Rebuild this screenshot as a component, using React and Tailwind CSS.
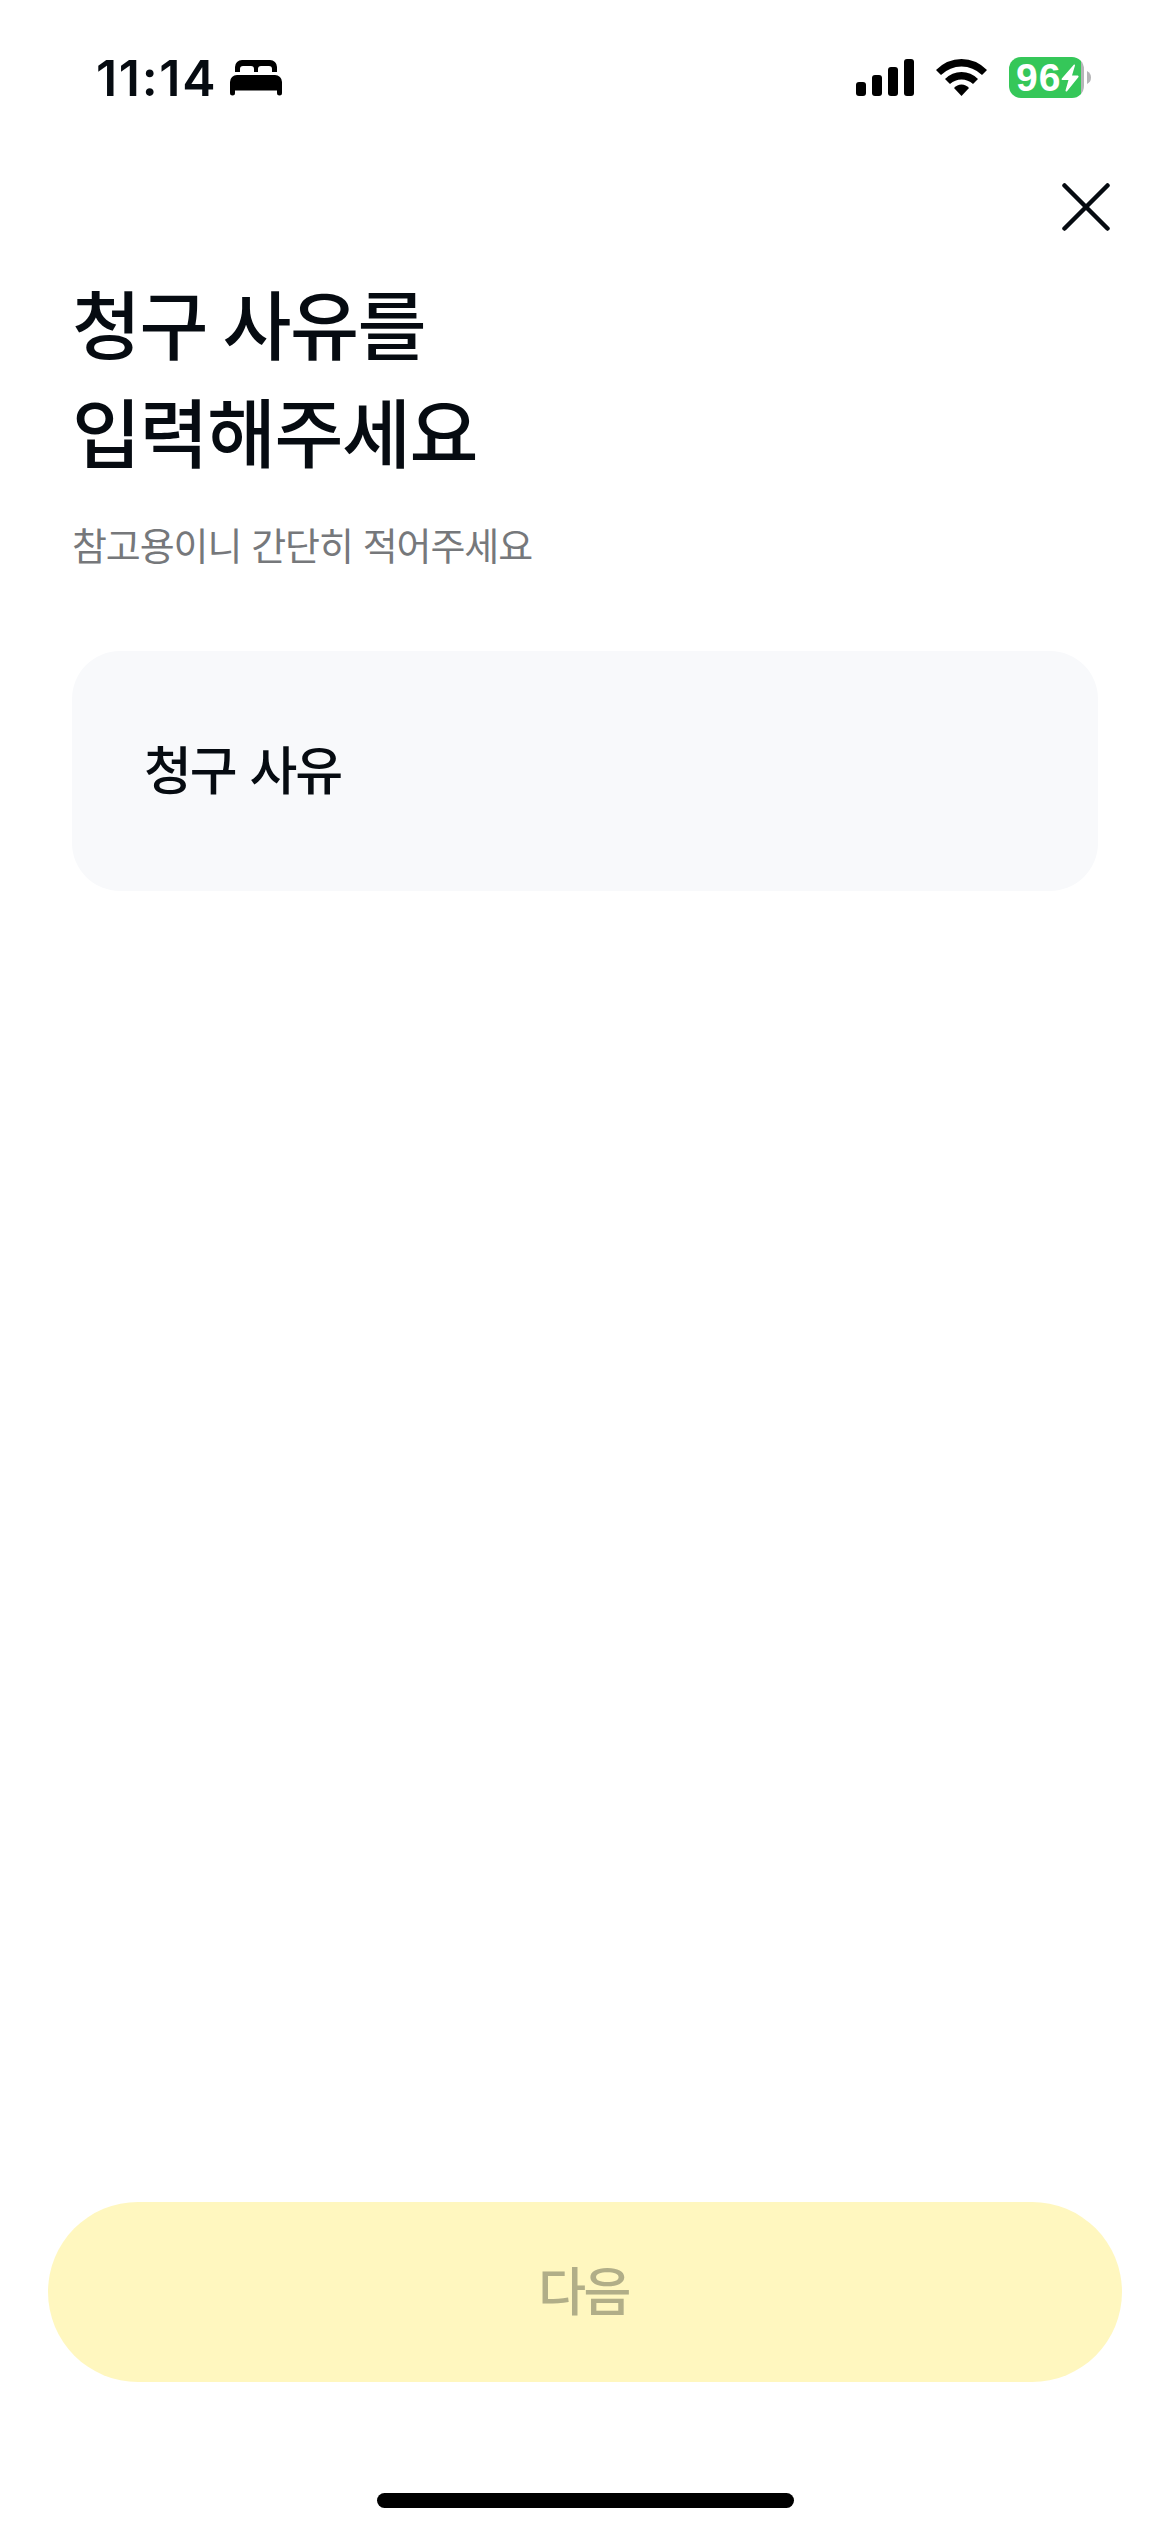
const korean = "font-['Noto_Sans_CJK_KR',sans-serif]";

function BedIcon() {
  return (
    <svg width="52" height="36" viewBox="0 0 52 36" fill="#000">
      <path d="M5 12V7a7 7 0 0 1 7-7h28a7 7 0 0 1 7 7v5h-5V9a3 3 0 0 0-3-3H31a3 3 0 0 0-3 3v3h-4V9a3 3 0 0 0-3-3h-8a3 3 0 0 0-3 3v3z" />
      <path d="M0 22a7 7 0 0 1 7-7h38a7 7 0 0 1 7 7v11a2.4 2.4 0 0 1-5 0v-2.5H5V33a2.4 2.4 0 0 1-5 0z" />
    </svg>
  );
}

function SignalIcon() {
  return (
    <svg width="58" height="37" viewBox="0 0 58 37" fill="#000">
      <rect x="0" y="23" width="10" height="14" rx="3" />
      <rect x="16" y="16" width="10" height="21" rx="3" />
      <rect x="32" y="8" width="10" height="29" rx="3" />
      <rect x="48" y="0" width="10" height="37" rx="3" />
    </svg>
  );
}

function WifiIcon() {
  return (
    <svg width="51" height="37" viewBox="0 0 51 37" fill="#000">
      <path d="M0 11Q11 0 25.5 0T51 11L46 16Q37 7.5 25.5 7.5T5 16z" />
      <path d="M9 20Q16 13 25.5 13T42 20L37 25Q32 20.5 25.5 20.5T14 25z" />
      <path d="M18 29Q21 25.5 25.5 25.5T33 29L25.5 37z" />
    </svg>
  );
}

function Battery() {
  return (
    <div className="flex items-center">
      <div className="flex h-[41px] w-[75px] items-center rounded-[12px] bg-[linear-gradient(to_right,#35c759_72px,#b5b5b7_72px)] pl-[7px]">
        <span className="font-['Liberation_Sans',sans-serif] text-[39px] leading-[41px] font-bold tracking-[1px] text-white">96</span>
        <svg className="shrink-0" width="18" height="28" viewBox="0 0 18 28" fill="#fff">
          <path d="M13 0.5L0.8 14.5Q0 16 1.5 16H7.5L4.5 26.5Q4.5 28 6 27.3L17.5 13Q18 11.5 16.7 11.5H11L14 1.5Q14 0 13 .5z" />
        </svg>
      </div>
      <svg className="ml-[3px]" width="4" height="13" viewBox="0 0 4 13" fill="#b5b5b7">
        <path d="M0 0Q4 2 4 6.5T0 13z" />
      </svg>
    </div>
  );
}

function StatusBar() {
  return (
    <header className="flex h-[156px] items-start justify-between pr-[79px] pl-[96px]">
      <div className="flex h-[156px] items-center gap-[13px]">
        <span className="font-['Inter',sans-serif] text-[50px] leading-none font-semibold tracking-[1.7px]">11:14</span>
        <BedIcon />
      </div>
      <div className="flex h-[155px] items-center">
        <SignalIcon />
        <div className="ml-[22px]">
          <WifiIcon />
        </div>
        <div className="ml-[22px]">
          <Battery />
        </div>
      </div>
    </header>
  );
}

export default function App() {
  return (
    <div className={`flex h-[2532px] w-[1170px] flex-col bg-white text-[#060b11] ${korean}`}>
      <StatusBar />

      <div className="flex h-[112px] justify-end pt-[27px] pr-[60px]">
        <button aria-label="닫기" className="h-[48px] w-[48px]">
          <svg width="48" height="48" viewBox="0 0 48 48" fill="none" stroke="#060b11" strokeWidth="4.5" strokeLinecap="round">
            <path d="M2.5 2.5L45.5 45.5M45.5 2.5L2.5 45.5" />
          </svg>
        </button>
      </div>

      <main className="flex-1 px-[72px]">
        <h1 className="text-[75px] leading-[108px] font-medium tracking-[-1.5px]">
          청구 사유를
          <br />
          입력해주세요
        </h1>
        <p className="mt-[32px] text-[38px] leading-[56px] tracking-[-1.1px] [word-spacing:2.5px] text-[#76787b]">
          참고용이니 간단히 적어주세요
        </p>
        <div className="mt-[79px] flex h-[240px] items-center rounded-[48px] bg-[#f8f9fb] px-[72px] pb-[6px]">
          <span className="text-[52px] leading-[72px] font-medium tracking-[-2px] [word-spacing:4px]">청구 사유</span>
        </div>
      </main>

      <footer className="flex flex-col items-center px-[48px] pb-[24px]">
        <button disabled className="h-[180px] w-full rounded-[90px] bg-[#fff7bf] pr-[3px] pb-[6px] text-[52px] font-medium tracking-[-2.5px] text-[#b1ae88]">
          다음
        </button>
        <div className="mt-[111px] h-[15px] w-[417px] rounded-full bg-black" />
      </footer>
    </div>
  );
}
